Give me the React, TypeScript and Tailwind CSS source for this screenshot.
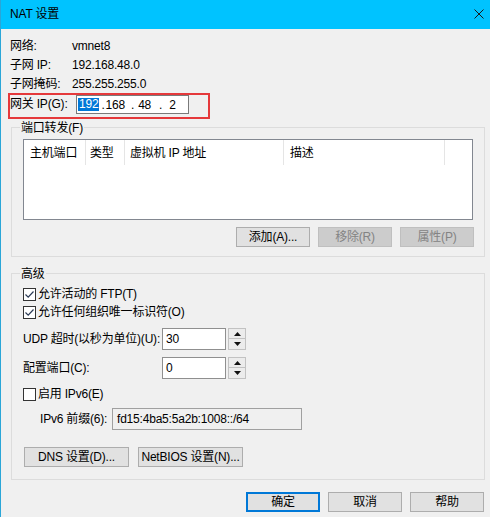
import React from "react"

function CheckBox({ checked }: { checked: boolean }) {
  return (
    <span className="w-[13px] h-[13px] border border-[#333333] bg-white flex items-center justify-center shrink-0">
      {checked && (
        <svg width="11" height="11" viewBox="0 0 11 11">
          <polyline points="1.5,5.5 4.2,8.2 9.5,2.5" fill="none" stroke="#2b3a55" strokeWidth="1.2" />
        </svg>
      )}
    </span>
  )
}

function Spinner() {
  return (
    <div className="ml-[2px] w-[18px] h-[22px] flex flex-col">
      <div className="h-[11px] border border-[#c2c2c2] bg-[#ececec] flex items-center justify-center">
        <svg width="7" height="4" viewBox="0 0 7 4">
          <polygon points="3.5,0 7,4 0,4" fill="#111" />
        </svg>
      </div>
      <div className="h-[11px] border border-t-0 border-[#c2c2c2] bg-[#ececec] flex items-center justify-center">
        <svg width="7" height="4" viewBox="0 0 7 4">
          <polygon points="0,0 7,0 3.5,4" fill="#111" />
        </svg>
      </div>
    </div>
  )
}

function Btn({ label, w, disabled, primary }: { label: string; w: string; disabled?: boolean; primary?: boolean }) {
  let cls = "h-[20px] flex items-center justify-center "
  if (primary) cls += "border-2 border-[#0078d7] bg-[#e1e1e1] text-black"
  else if (disabled) cls += "border border-[#bfbfbf] bg-[#cccccc] text-[#838383]"
  else cls += "border border-[#adadad] bg-[#e1e1e1] text-black"
  return <div className={cls + " " + w}>{label}</div>
}

export default function App() {
  return (
    <div className="w-[490px] h-[517px] overflow-hidden flex flex-col bg-[#f0f0f0] border-l border-[#2aa6d8] text-[12px] text-black tracking-[-0.2px] font-['Liberation_Sans','Noto_Sans_CJK_SC',sans-serif]">
      {/* Title bar */}
      <div className="h-[29px] shrink-0 bg-[#00c3ff] flex items-center justify-between pl-[9px] pr-[6px] pb-[1px]">
        <span>NAT 设置</span>
        <svg width="10" height="10" viewBox="0 0 10 10">
          <path d="M0.5 0.5 L9.5 9.5 M9.5 0.5 L0.5 9.5" stroke="#1a1a1a" strokeWidth="1" />
        </svg>
      </div>

      <div className="flex flex-col pl-[9px]">
        {/* Network info */}
        <div className="mt-[7px] flex h-[19px] items-center">
          <span className="w-[62px]">网络:</span>
          <span>vmnet8</span>
        </div>
        <div className="flex h-[19px] items-center">
          <span className="w-[62px]">子网 IP:</span>
          <span>192.168.48.0</span>
        </div>
        <div className="flex h-[19px] items-center">
          <span className="w-[62px]">子网掩码:</span>
          <span>255.255.255.0</span>
        </div>

        <div className="-ml-[2px] w-[202px] h-[26px] border-2 border-[#e5393b] flex items-start">
          <span className="w-[66px] h-[19px] leading-[19px]">网关 IP(G):</span>
          <div className="w-[113px] h-[19px] border border-[#7a7a7a] bg-white flex items-center pl-[1px]">
            <span className="bg-[#0078d7] text-white h-[13px] leading-[13px] px-[1px]">192</span>
            <span className="ml-[2px]">.</span>
            <span className="ml-[1px]">168</span>
            <span className="ml-[6px]">.</span>
            <span className="ml-[4px]">48</span>
            <span className="ml-[8px]">.</span>
            <span className="ml-[7px]">2</span>
          </div>
        </div>

        {/* Port forwarding */}
        <div className="mt-[8px] ml-[1px] w-[474px] border border-[#dcdcdc] flex flex-col pb-[9px]">
          <span className="-mt-[7px] ml-[8px] px-[1px] h-[14px] leading-[14px] bg-[#f0f0f0] self-start">端口转发(F)</span>
          <div className="mt-[4px] ml-[11px] w-[450px] h-[81px] border border-[#828790] bg-white">
            <div className="flex h-[25px]">
              <div className="w-[62px] pl-[6px] border-r border-[#e5e5e5] flex items-center">主机端口</div>
              <div className="w-[39px] pl-[4px] border-r border-[#e5e5e5] flex items-center">类型</div>
              <div className="w-[159px] pl-[5px] border-r border-[#e5e5e5] flex items-center">虚拟机 IP 地址</div>
              <div className="w-[161px] pl-[6px] border-r border-[#e5e5e5] flex items-center">描述</div>
            </div>
          </div>
          <div className="mt-[7px] flex justify-end gap-[8px] pr-[10px]">
            <Btn label="添加(A)..." w="w-[74px]" />
            <Btn label="移除(R)" w="w-[74px]" disabled />
            <Btn label="属性(P)" w="w-[74px]" disabled />
          </div>
        </div>

        {/* Advanced */}
        <div className="mt-[16px] ml-[1px] w-[474px] border border-[#dcdcdc] flex flex-col pb-[12px]">
          <span className="-mt-[7px] ml-[8px] px-[1px] h-[14px] leading-[14px] bg-[#f0f0f0] self-start">高级</span>
          <div className="mt-[4px] ml-[11px] flex h-[18px] items-center gap-[2px]">
            <CheckBox checked />
            <span>允许活动的 FTP(T)</span>
          </div>
          <div className="ml-[11px] flex h-[18px] items-center gap-[2px]">
            <CheckBox checked />
            <span>允许任何组织唯一标识符(O)</span>
          </div>
          <div className="mt-[7px] ml-[11px] flex h-[22px] items-center">
            <span className="w-[139px]">UDP 超时(以秒为单位)(U):</span>
            <div className="w-[64px] h-[22px] border border-[#8f8f8f] bg-white flex items-center pl-[3px]">30</div>
            <Spinner />
          </div>
          <div className="mt-[7px] ml-[11px] flex h-[22px] items-center">
            <span className="w-[139px]">配置端口(C):</span>
            <div className="w-[64px] h-[22px] border border-[#8f8f8f] bg-white flex items-center pl-[3px]">0</div>
            <Spinner />
          </div>
          <div className="mt-[6px] ml-[11px] flex h-[18px] items-center gap-[2px]">
            <CheckBox checked={false} />
            <span>启用 IPv6(E)</span>
          </div>
          <div className="mt-[5px] ml-[11px] pl-[17px] flex h-[22px] items-center">
            <span className="w-[72px]">IPv6 前缀(6):</span>
            <div className="w-[190px] h-[22px] border border-[#a0a0a0] bg-[#f0f0f0] flex items-center pl-[4px]">
              fd15:4ba5:5a2b:1008::/64
            </div>
          </div>
          <div className="mt-[17px] ml-[12px] flex gap-[9px]">
            <Btn label="DNS 设置(D)..." w="w-[105px]" />
            <Btn label="NetBIOS 设置(N)..." w="w-[105px]" />
          </div>
        </div>

        {/* Dialog buttons */}
        <div className="mt-[12px] flex justify-end gap-[8px] pr-[6px]">
          <Btn label="确定" w="w-[74px]" primary />
          <Btn label="取消" w="w-[74px]" />
          <Btn label="帮助" w="w-[74px]" />
        </div>
      </div>
    </div>
  )
}
